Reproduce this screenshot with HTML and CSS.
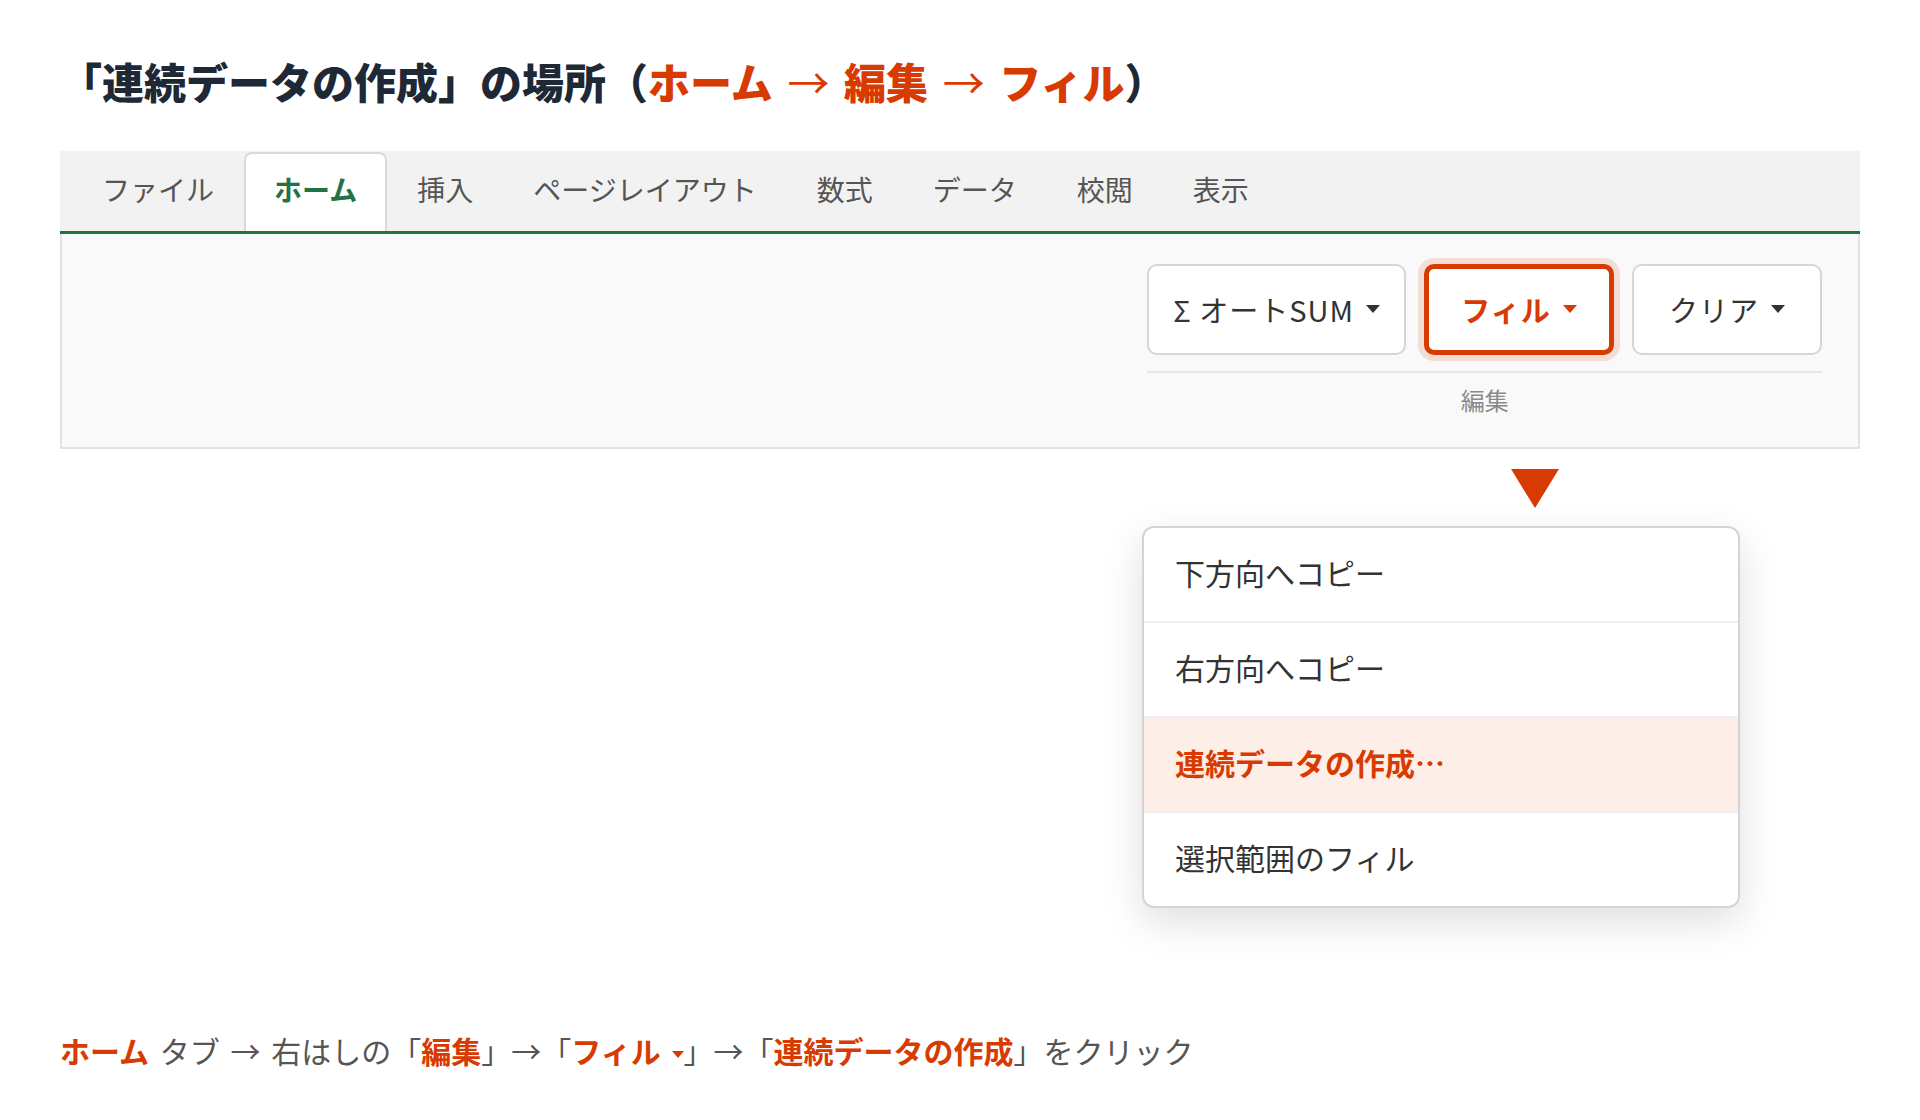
FILE: index.html
```
<!DOCTYPE html>
<html lang="ja">

<head>
    <meta charset="utf-8">
    <title>連続データの作成の場所</title>
    <link rel="stylesheet" href="styles.css">
</head>

<body>
    <h1 class="title">「連続データの作成」の場所（<span class="hl">ホーム</span> <span class="arrow">→</span> <span class="hl">編集</span> <span class="arrow">→</span> <span class="hl">フィル</span>）</h1>

    <div class="ribbon">
        <div class="tabs">
            <div class="tab">ファイル</div>
            <div class="tab active">ホーム</div>
            <div class="tab">挿入</div>
            <div class="tab">ページレイアウト</div>
            <div class="tab">数式</div>
            <div class="tab">データ</div>
            <div class="tab">校閲</div>
            <div class="tab">表示</div>
        </div>
        <div class="panel">
            <div class="group">
                <div class="buttons">
                    <button class="btn">Σ オートSUM<span class="caret"></span></button>
                    <button class="btn fill">フィル<span class="caret"></span></button>
                    <button class="btn">クリア<span class="caret"></span></button>
                </div>
                <div class="group-label">編集</div>
            </div>
        </div>
    </div>

    <div class="popout">
        <div class="pointer"></div>
        <ul class="menu">
            <li>下方向へコピー</li>
            <li>右方向へコピー</li>
            <li class="current">連続データの作成…</li>
            <li>選択範囲のフィル</li>
        </ul>
    </div>

    <p class="hint"><b>ホーム</b> タブ → 右はしの「<b>編集</b>」→「<b>フィル <span class="caret small"></span></b>」→「<b>連続データの作成</b>」をクリック</p>
</body>

</html>
```

FILE: styles.css
```
body {
    font-family: "Noto Sans CJK JP", "Noto Sans", sans-serif;
    background-color: #fff;
    color: #333;
    margin: 0;
    padding: 51px 60px 0;
}

.title {
    margin: 0 0 40px;
    font-size: 42px;
    line-height: 60px;
    font-weight: 900;
    color: #1f2835;
}

.title .hl {
    color: #d83b01;
}

.title .arrow {
    margin: 0 5px;
    color: #d83b01;
    font-weight: 400;
}

.ribbon {
    width: 1800px;
}

.tabs {
    display: flex;
    align-items: flex-end;
    height: 80px;
    padding: 0 12px;
    background-color: #f2f2f2;
    border-bottom: 3px solid #217346;
}

.tab {
    height: 79px;
    display: flex;
    align-items: center;
    padding: 0 28px 7px;
    border: 2px solid transparent;
    border-bottom: none;
    box-sizing: border-box;
    font-size: 28px;
    color: #555;
}

.tab.active {
    background-color: #fff;
    border-color: #dadada;
    border-radius: 8px 8px 0 0;
    color: #217346;
    font-weight: bold;
}

.panel {
    display: flex;
    justify-content: flex-end;
    padding: 30px 36px 31px;
    background-color: #f9f9f9;
    border: 2px solid #e3e3e3;
    border-top: none;
}

.group {
    display: flex;
    flex-direction: column;
}

.buttons {
    display: flex;
    gap: 18px;
}

.btn {
    display: flex;
    align-items: center;
    justify-content: center;
    gap: 12px;
    height: 91px;
    min-width: 190px;
    padding: 0 24px 2px;
    box-sizing: border-box;
    background-color: #fff;
    border: 2px solid #d6d6d6;
    border-radius: 10px;
    font-family: inherit;
    font-size: 29px;
    letter-spacing: 1px;
    color: #333;
}

.btn.fill {
    border: 5px solid #d83b01;
    box-shadow: 0 0 0 6px rgba(216, 59, 1, 0.14);
    color: #d83b01;
    font-weight: bold;
}

.caret {
    display: inline-block;
    width: 0;
    height: 0;
    border-left: 7px solid transparent;
    border-right: 7px solid transparent;
    border-top: 8px solid currentColor;
}

.caret.small {
    border-left-width: 6px;
    border-right-width: 6px;
    border-top-width: 7px;
    vertical-align: middle;
}

.group-label {
    margin-top: 16px;
    padding-top: 11px;
    border-top: 2px solid #e6e6e6;
    text-align: center;
    font-size: 24px;
    line-height: 32px;
    color: #8a8a8a;
}

.popout {
    display: flex;
    flex-direction: column;
    align-items: flex-end;
    margin-right: 120px;
    padding-top: 20px;
}

.pointer {
    width: 0;
    height: 0;
    margin-right: 181px;
    margin-bottom: 18px;
    border-left: 24px solid transparent;
    border-right: 24px solid transparent;
    border-top: 39px solid #d83b01;
}

.menu {
    width: 598px;
    margin: 0;
    padding: 0;
    list-style: none;
    box-sizing: border-box;
    background-color: #fff;
    border: 2px solid #d4d4d4;
    border-radius: 12px;
    overflow: hidden;
    box-shadow: 0 14px 40px rgba(0, 0, 0, 0.13);
}

.menu li {
    height: 93px;
    display: flex;
    align-items: center;
    padding: 0 31px 5px;
    box-sizing: border-box;
    font-size: 30px;
    color: #333;
}

.menu li + li {
    height: 95px;
    border-top: 2px solid #efefef;
}

.menu li.current {
    background-color: #fdeee8;
    color: #d83b01;
    font-weight: bold;
}

.hint {
    margin: 120px 0 0;
    font-size: 30px;
    line-height: 45px;
    word-spacing: 4px;
    color: #555;
}

.hint b {
    color: #d83b01;
}
```
